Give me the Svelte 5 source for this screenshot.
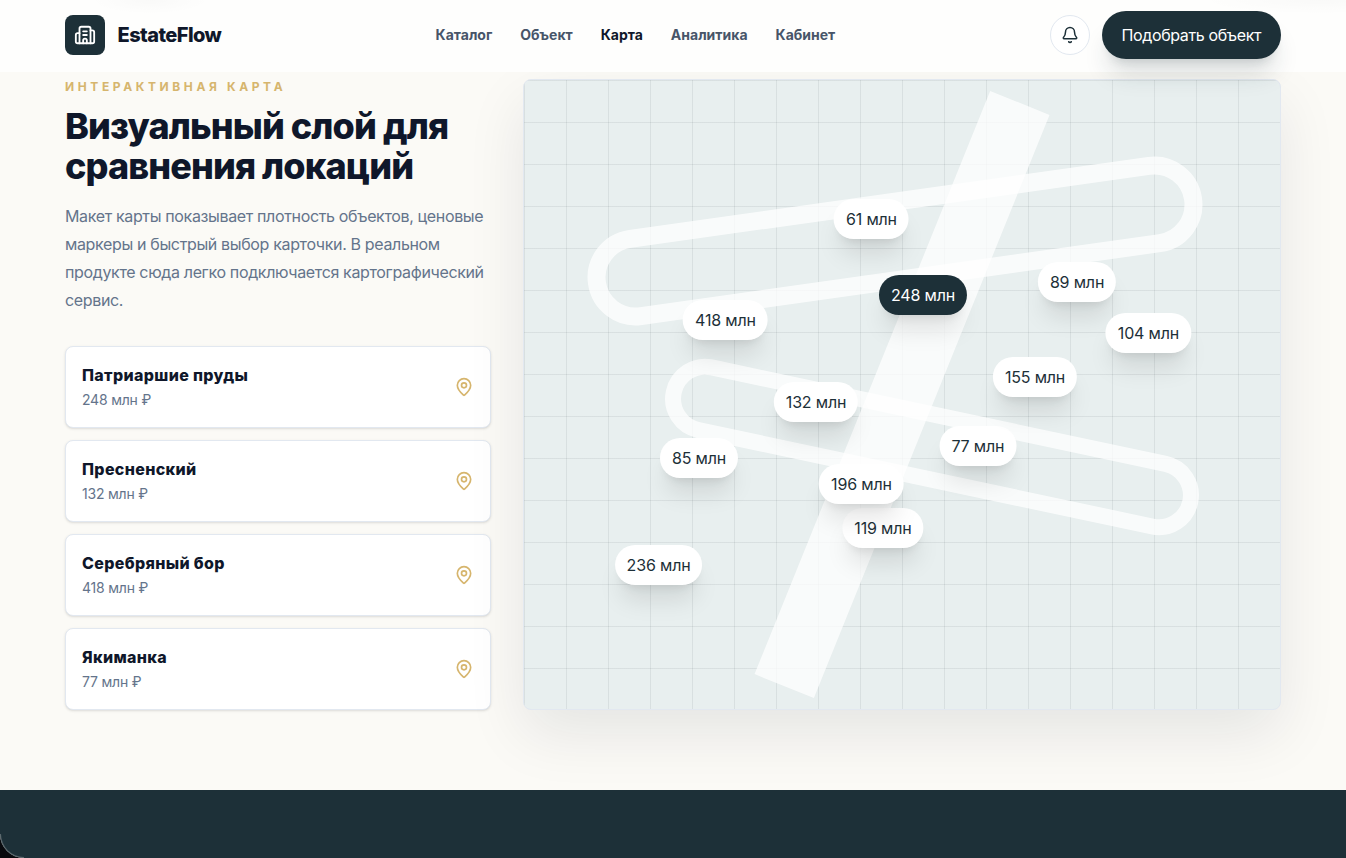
<script lang="ts">
	type District = { name: string; price: string };
	type Marker = { label: string; x: number; y: number; active?: boolean };

	const links = ['Каталог', 'Объект', 'Карта', 'Аналитика', 'Кабинет'];
	let current = $state('Карта');

	const districts: District[] = [
		{ name: 'Патриаршие пруды', price: '248 млн ₽' },
		{ name: 'Пресненский', price: '132 млн ₽' },
		{ name: 'Серебряный бор', price: '418 млн ₽' },
		{ name: 'Якиманка', price: '77 млн ₽' }
	];

	// marker centres, in px from the map's inner corner
	let markers: Marker[] = $state([
		{ label: '248 млн', x: 398.8, y: 215, active: true },
		{ label: '132 млн', x: 291.8, y: 322 },
		{ label: '418 млн', x: 201.2, y: 240 },
		{ label: '77 млн', x: 453.6, y: 366 },
		{ label: '89 млн', x: 552.8, y: 202 },
		{ label: '155 млн', x: 510.8, y: 297 },
		{ label: '61 млн', x: 347.2, y: 139 },
		{ label: '104 млн', x: 624.2, y: 253 },
		{ label: '236 млн', x: 134.3, y: 485 },
		{ label: '119 млн', x: 358.7, y: 448 },
		{ label: '196 млн', x: 337.2, y: 404 },
		{ label: '85 млн', x: 174.8, y: 378 }
	]);

	function select(marker: Marker) {
		for (const m of markers) m.active = m.label === marker.label;
	}
</script>

<div class="page">
	<header class="header">
		<div class="container header-row">
			<div class="brand">
				<span class="brand-icon">
					<svg width="22" height="22" viewBox="0 0 24 24">
						<path d="M10 12h4" />
						<path d="M10 8h4" />
						<path d="M14 21v-3a2 2 0 0 0-4 0v3" />
						<path d="M6 10H4a2 2 0 0 0-2 2v7a2 2 0 0 0 2 2h16a2 2 0 0 0 2-2V9a2 2 0 0 0-2-2h-2" />
						<path d="M6 21V5a2 2 0 0 1 2-2h8a2 2 0 0 1 2 2v16" />
					</svg>
				</span>
				<span class="brand-name">EstateFlow</span>
			</div>

			<nav class="nav">
				{#each links as link}
					<button class="nav-link" class:active={link === current} onclick={() => (current = link)}>
						{link}
					</button>
				{/each}
			</nav>

			<div class="actions">
				<button class="bell" aria-label="Уведомления">
					<svg width="18" height="18" viewBox="0 0 24 24">
						<path d="M10.268 21a2 2 0 0 0 3.464 0" />
						<path
							d="M3.262 15.326A1 1 0 0 0 4 17h16a1 1 0 0 0 .74-1.673C19.41 13.956 18 12.499 18 8A6 6 0 0 0 6 8c0 4.499-1.411 5.956-2.738 7.326"
						/>
					</svg>
				</button>
				<button class="cta">Подобрать объект</button>
			</div>
		</div>
	</header>

	<main class="container content">
		<section class="intro">
			<p class="eyebrow">Интерактивная карта</p>
			<h2 class="title">Визуальный слой для сравнения локаций</h2>
			<p class="lead">
				Макет карты показывает плотность объектов, ценовые маркеры и быстрый выбор карточки. В
				реальном продукте сюда легко подключается картографический сервис.
			</p>

			<div class="districts">
				{#each districts as district}
					<button class="district">
						<span>
							<span class="district-name">{district.name}</span>
							<span class="district-price">{district.price}</span>
						</span>
						<svg class="pin" width="20" height="20" viewBox="0 0 24 24">
							<path
								d="M20 10c0 4.993-5.539 10.193-7.399 11.799a1 1 0 0 1-1.202 0C9.539 20.193 4 14.993 4 10a8 8 0 0 1 16 0"
							/>
							<circle cx="12" cy="10" r="3" />
						</svg>
					</button>
				{/each}
			</div>
		</section>

		<section class="map">
			<div class="ring ring-north"></div>
			<div class="ring ring-south"></div>
			<div class="road"></div>
			{#each markers as marker}
				<button
					class="marker"
					class:active={marker.active}
					style="left: {marker.x}px; top: {marker.y}px"
					onclick={() => select(marker)}
				>
					{marker.label}
				</button>
			{/each}
		</section>
	</main>

	<footer class="footer"></footer>
</div>

<style>
	:global(body) {
		background: #08090d;
		overflow: hidden;
	}

	.page {
		display: flex;
		flex-direction: column;
		height: 858px;
		background: #fbfaf6;
		border-bottom-left-radius: 24px;
		overflow: hidden;
		color: #1d3038;
		font-family: Inter, 'Liberation Sans', sans-serif;
		font-size: 16px;
		line-height: 24px;
	}

	button {
		margin: 0;
		padding: 0;
		border: 0;
		background: none;
		color: inherit;
		font: inherit;
		cursor: pointer;
	}

	p,
	h2 {
		margin: 0;
	}

	svg {
		flex-shrink: 0;
		fill: none;
		stroke: currentColor;
		stroke-width: 2;
		stroke-linecap: round;
		stroke-linejoin: round;
	}

	.container {
		box-sizing: border-box;
		width: 1216px;
		margin: 0 auto;
	}

	/* Header */
	.header {
		position: relative;
		z-index: 10;
		flex: none;
		height: 71.8px;
		background:
			radial-gradient(60px 14px at 150px 0, rgba(0, 0, 0, 0.02), transparent),
			radial-gradient(120px 14px at 1320px 0, rgba(0, 0, 0, 0.02), transparent),
			#fefefd;
	}

	.header-row {
		display: flex;
		align-items: center;
		justify-content: space-between;
		height: 70px;
	}

	.brand {
		display: flex;
		align-items: center;
		gap: 12.5px;
	}

	.brand-icon {
		display: grid;
		place-items: center;
		width: 40px;
		height: 40px;
		border-radius: 8px;
		background: #1d3038;
		color: #fff;
	}

	.brand-name {
		font-size: 20px;
		font-weight: 800;
		letter-spacing: -0.028em;
		color: #0f172a;
	}

	.nav {
		display: flex;
		gap: 28px;
	}

	.nav-link {
		font-size: 14px;
		font-weight: 700;
		line-height: 20px;
		color: #475569;
	}

	.nav-link.active {
		color: #0f172a;
	}

	.actions {
		display: flex;
		align-items: center;
		gap: 12px;
	}

	.bell {
		display: grid;
		place-items: center;
		box-sizing: border-box;
		width: 40px;
		height: 40px;
		border: 1px solid #e2e8f0;
		border-radius: 50%;
		background: #fff;
	}

	.cta {
		height: 48px;
		padding: 0 20px;
		border-radius: 24px;
		background: #1d3038;
		color: #fff;
		letter-spacing: -0.38px;
		white-space: nowrap;
		box-shadow:
			0 20px 25px -5px rgba(29, 48, 56, 0.15),
			0 8px 10px -6px rgba(29, 48, 56, 0.15);
	}

	/* Section */
	.content {
		display: grid;
		grid-template-columns: 0.9fr 1.6fr;
		gap: 32px;
		flex: none;
		padding-top: 7px;
		padding-bottom: 80px;
	}

	.eyebrow {
		font-size: 12px;
		font-weight: 700;
		line-height: 16px;
		letter-spacing: 0.3em;
		text-transform: uppercase;
		color: #d6b56d;
	}

	.title {
		margin-top: 11.2px;
		font-size: 36px;
		font-weight: 800;
		line-height: 40px;
		letter-spacing: -0.025em;
		color: #0f172a;
	}

	.lead {
		margin-top: 16px;
		line-height: 28px;
		letter-spacing: -0.35px;
		color: #64748b;
	}

	.districts {
		display: grid;
		gap: 12px;
		margin-top: 32px;
	}

	.district {
		display: flex;
		align-items: center;
		justify-content: space-between;
		padding: 16px;
		border: 1px solid #e2e8f0;
		border-radius: 8px;
		background: #fff;
		text-align: left;
		box-shadow:
			0 1px 3px rgba(0, 0, 0, 0.1),
			0 1px 2px -1px rgba(0, 0, 0, 0.1);
	}

	.district-name {
		display: block;
		font-weight: 800;
		letter-spacing: 0.35px;
		color: #0f172a;
	}

	.district-price {
		display: block;
		margin: 3px 0 1px;
		font-size: 14px;
		line-height: 20px;
		letter-spacing: -0.2px;
		color: #64748b;
	}

	.pin {
		color: #d6b56d;
	}

	/* Map */
	.map {
		position: relative;
		border: 1px solid #e2e8f0;
		border-radius: 8px;
		background-color: #e8efef;
		background-image:
			linear-gradient(rgba(29, 48, 56, 0.08) 1px, transparent 1px),
			linear-gradient(90deg, rgba(29, 48, 56, 0.08) 1px, transparent 1px);
		background-size: 42px 42px;
		box-shadow: 0 24px 60px rgba(15, 23, 42, 0.09);
	}

	.ring {
		position: absolute;
		box-sizing: border-box;
		border-style: solid;
		border-color: rgba(255, 255, 255, 0.75);
		border-radius: 999px;
	}

	.ring-north {
		left: 8%;
		top: 18%;
		width: 82%;
		height: 96px;
		border-width: 18px;
		transform: rotate(-8deg);
	}

	.ring-south {
		left: 18%;
		top: 52%;
		width: 72%;
		height: 80px;
		border-width: 16px;
		transform: rotate(12deg);
	}

	.road {
		position: absolute;
		top: 0;
		left: 50%;
		width: 64px;
		height: 100%;
		background: rgba(255, 255, 255, 0.75);
		transform: translateX(-50%) rotate(22deg);
	}

	.marker {
		position: absolute;
		height: 40px;
		padding: 0 12px;
		border-radius: 20px;
		background: #fff;
		letter-spacing: -0.17px;
		white-space: nowrap;
		transform: translate(-50%, -50%);
		box-shadow:
			0 20px 25px -5px rgba(0, 0, 0, 0.1),
			0 8px 10px -6px rgba(0, 0, 0, 0.1);
	}

	.marker.active {
		background: #1d3038;
		color: #fff;
	}

	.footer {
		position: relative;
		flex: 1;
		background: #1d3038;
	}

	.footer::before {
		content: '';
		position: absolute;
		left: 0;
		bottom: 0;
		width: 24px;
		height: 24px;
		border: solid rgba(255, 255, 255, 0.25);
		border-width: 0 0 1px 1px;
		border-bottom-left-radius: 24px;
		box-sizing: border-box;
	}
</style>
